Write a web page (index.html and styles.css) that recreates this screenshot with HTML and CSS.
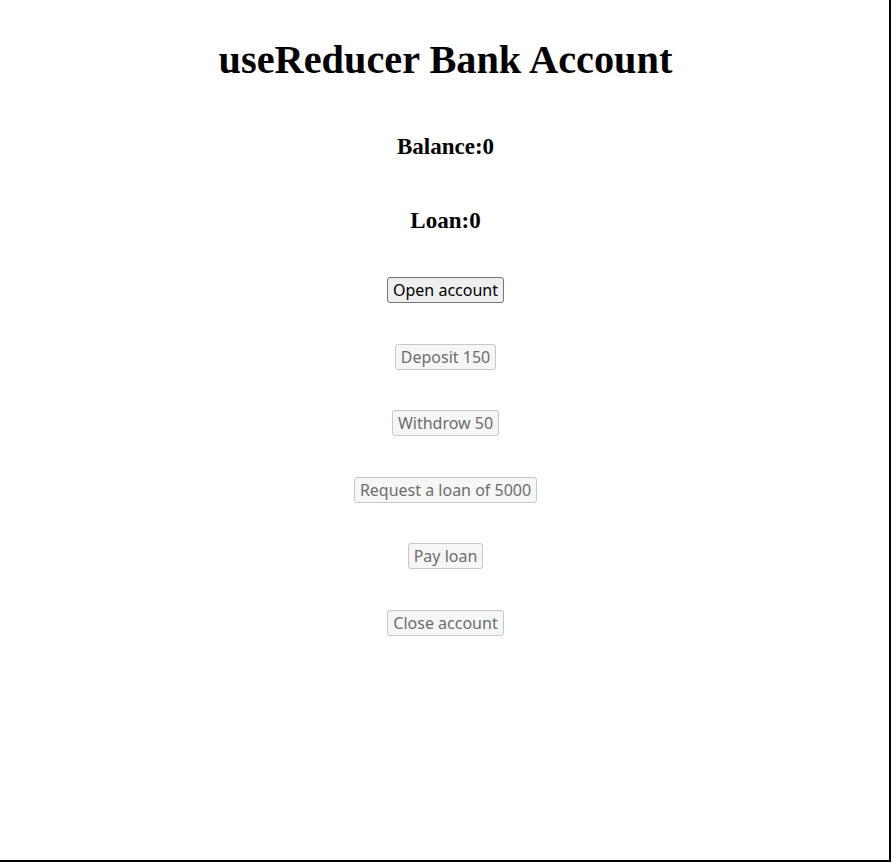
FILE: index.html
```html
<!DOCTYPE html>
<html>
<head>
<meta charset="utf-8">
<link rel="stylesheet" href="styles.css">
</head>
<body>
<div class="frame">
  <div class="app">
    <h1 class="title">useReducer Bank Account</h1>
    <h3 class="stat">Balance:0</h3>
    <h3 class="stat">Loan:0</h3>
    <div class="actions">
      <button class="btn">Open account</button>
      <button class="btn" disabled>Deposit 150</button>
      <button class="btn" disabled>Withdrow 50</button>
      <button class="btn" disabled>Request a loan of 5000</button>
      <button class="btn" disabled>Pay loan</button>
      <button class="btn" disabled>Close account</button>
    </div>
  </div>
</div>
</body>
</html>
```
FILE: styles.css
```css
html, body {
  margin: 0;
  padding: 0;
  background: #fff;
}
.frame {
  box-sizing: border-box;
  width: 891px;
  height: 862px;
  border-right: 2px solid #000;
  border-bottom: 2px solid #000;
}
.app {
  display: flex;
  flex-direction: column;
  align-items: center;
  font-family: "Liberation Serif", serif;
  padding-top: 36px;
  padding-left: 2px;
}
.title {
  font-size: 40.3px;
  font-weight: bold;
  margin: 0 0 50px;
  line-height: 48px;
}
.stat {
  font-size: 23px;
  font-weight: bold;
  margin: 0 0 48px;
  line-height: 26px;
}
.stat + .stat {
  margin-bottom: 43px;
}
.actions {
  display: flex;
  flex-direction: column;
  align-items: center;
  gap: 40.6px;
}
.btn {
  box-sizing: border-box;
  height: 26px;
  font-family: "Noto Sans", sans-serif;
  font-size: 16px;
  line-height: 22px;
  padding: 1px 5px;
  color: #000;
  background: #efefef;
  border: 1px solid #767676;
  border-radius: 3px;
}
.btn:disabled {
  color: #6d6d6d;
  background: #f6f6f7;
  border-color: #c8c8cc;
}
```
